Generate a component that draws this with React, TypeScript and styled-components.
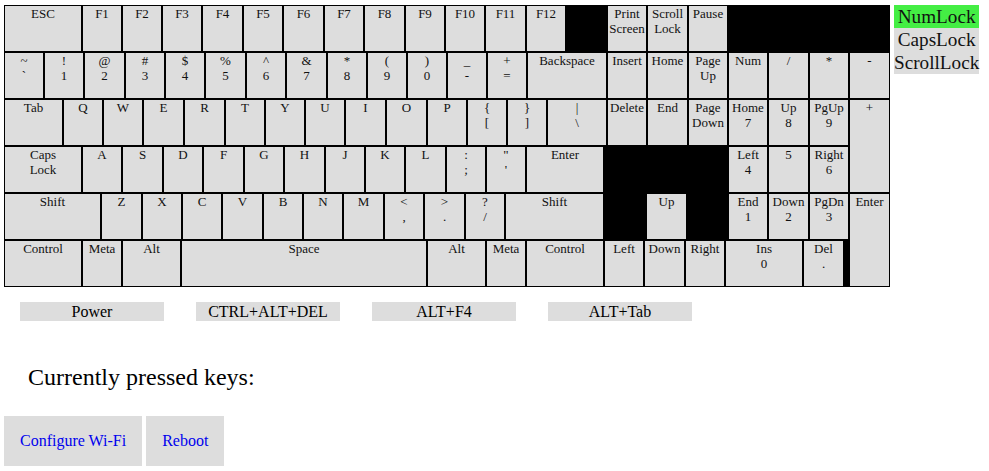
import React from 'react';
import styled, { createGlobalStyle } from 'styled-components';

const GlobalStyle = createGlobalStyle`
  html, body {
    margin: 0;
    padding: 0;
    background: #fff;
    font-family: "Liberation Serif", "Times New Roman", serif;
    color: #000;
  }
`;

const ROW_H = 47;
const LEFT = 4;

type KeyDef = [string | null, number];

// each entry: label (null = empty black space) and right edge in px
const rows: KeyDef[][] = [
  [
    ['ESC', 82], ['F1', 122], ['F2', 162], ['F3', 202], ['F4', 243], ['F5', 283],
    ['F6', 324], ['F7', 364], ['F8', 405], ['F9', 445], ['F10', 485], ['F11', 526],
    ['F12', 566], [null, 607], ['Print\nScreen', 647], ['Scroll\nLock', 688],
    ['Pause', 728], [null, 849],
  ],
  [
    ['~\n`', 44], ['!\n1', 84], ['@\n2', 125], ['#\n3', 165], ['$\n4', 205],
    ['%\n5', 246], ['^\n6', 286], ['&\n7', 327], ['*\n8', 367], ['(\n9', 407],
    [')\n0', 447], ['_\n-', 487], ['+\n=', 527], ['Backspace', 607],
    ['Insert', 647], ['Home', 688], ['Page\nUp', 728], ['Num', 768], ['/', 809],
    ['*', 849],
  ],
  [
    ['Tab', 63], ['Q', 103], ['W', 143], ['E', 184], ['R', 225], ['T', 265],
    ['Y', 305], ['U', 345], ['I', 386], ['O', 427], ['P', 467], ['{\n[', 507],
    ['}\n]', 547], ['|\n\\', 607], ['Delete', 647], ['End', 688],
    ['Page\nDown', 728], ['Home\n7', 768], ['Up\n8', 809], ['PgUp\n9', 849],
  ],
  [
    ['Caps\nLock', 82], ['A', 122], ['S', 163], ['D', 203], ['F', 244], ['G', 284],
    ['H', 325], ['J', 365], ['K', 405], ['L', 446], [':\n;', 486], ['"\n\'', 526],
    ['Enter', 604], [null, 728], ['Left\n4', 768], ['5', 809], ['Right\n6', 849],
  ],
  [
    ['Shift', 101], ['Z', 142], ['X', 182], ['C', 222], ['V', 263], ['B', 303],
    ['N', 343], ['M', 384], ['<\n,', 424], ['>\n.', 465], ['?\n/', 505],
    ['Shift', 604], [null, 646], ['Up', 687], [null, 728], ['End\n1', 768],
    ['Down\n2', 809], ['PgDn\n3', 849],
  ],
  [
    ['Control', 82], ['Meta', 122], ['Alt', 181], ['Space', 427], ['Alt', 486],
    ['Meta', 526], ['Control', 604], ['Left', 644], ['Down', 685], ['Right', 725],
    ['Ins\n0', 803], ['Del\n.', 844], [null, 849],
  ],
];

const Page = styled.div`
  padding: 5px ${LEFT}px 0;
`;

const Top = styled.div`
  display: flex;
  align-items: flex-start;
`;

const Keyboard = styled.div`
  display: flex;
  background: #000;
`;

const MainBlock = styled.div`
  display: flex;
  flex-direction: column;
`;

const Row = styled.div`
  display: flex;
  height: ${ROW_H}px;
`;

const Key = styled.div<{ $w: number; $rows?: number }>`
  box-sizing: border-box;
  width: ${p => p.$w}px;
  height: ${p => (p.$rows || 1) * ROW_H}px;
  border: 1px solid #000;
  padding: 0 1px;
  background: #ddd;
  color: #111;
  font-size: 13px;
  line-height: 15px;
  text-align: center;
  white-space: pre-line;
  overflow: hidden;
`;

const Blank = styled.div<{ $w: number; $h?: number }>`
  width: ${p => p.$w}px;
  height: ${p => p.$h || ROW_H}px;
  flex-shrink: 0;
`;

const SideColumn = styled.div`
  display: flex;
  flex-direction: column;
  width: 41px;
`;

const Locks = styled.div`
  display: flex;
  flex-direction: column;
  margin-left: 4px;
  font-size: 19.2px;
`;

const Lock = styled.div<{ $on?: boolean }>`
  background: ${p => (p.$on ? '#44ee44' : '#ddd')};
  color: #111;
  text-align: center;
  line-height: 23px;
`;

const Macros = styled.div`
  display: flex;
  gap: 32px;
  margin: 15px 0 0 16px;
`;

const MacroButton = styled.button`
  width: 144px;
  height: 19px;
  padding: 0;
  border: none;
  background: #ddd;
  font-family: "Liberation Serif", "Times New Roman", serif;
  font-size: 16px;
  line-height: 19px;
  color: #000;
`;

const Pressed = styled.div`
  margin: 43px 0 0 24px;
  font-size: 24px;
  line-height: normal;
`;

const Links = styled.div`
  display: flex;
  gap: 4px;
  margin-top: 25px;
`;

const ActionLink = styled.a`
  display: inline-block;
  padding: 16px;
  background: #ddd;
  color: #0000ee;
  font-size: 16px;
  text-decoration: none;
`;

const KeyRow: React.FC<{ keys: KeyDef[] }> = ({ keys }) => {
  let prev = LEFT;
  return (
    <Row>
      {keys.map(([label, end], i) => {
        const w = end - prev;
        prev = end;
        return label === null ? <Blank key={i} $w={w} /> : <Key key={i} $w={w}>{label}</Key>;
      })}
    </Row>
  );
};

export default function App() {
  return (
    <>
      <GlobalStyle />
      <Page>
        <Top>
          <Keyboard>
            <MainBlock>
              {rows.map((r, i) => (
                <KeyRow key={i} keys={r} />
              ))}
            </MainBlock>
            <SideColumn>
              <Blank $w={41} />
              <Key $w={41}>-</Key>
              <Key $w={41} $rows={2}>+</Key>
              <Key $w={41} $rows={2}>Enter</Key>
            </SideColumn>
          </Keyboard>
          <Locks>
            <Lock $on>NumLock</Lock>
            <Lock>CapsLock</Lock>
            <Lock>ScrollLock</Lock>
          </Locks>
        </Top>
        <Macros>
          <MacroButton>Power</MacroButton>
          <MacroButton>CTRL+ALT+DEL</MacroButton>
          <MacroButton>ALT+F4</MacroButton>
          <MacroButton>ALT+Tab</MacroButton>
        </Macros>
        <Pressed>Currently pressed keys:</Pressed>
        <Links>
          <ActionLink href="#">Configure Wi-Fi</ActionLink>
          <ActionLink href="#">Reboot</ActionLink>
        </Links>
      </Page>
    </>
  );
}
